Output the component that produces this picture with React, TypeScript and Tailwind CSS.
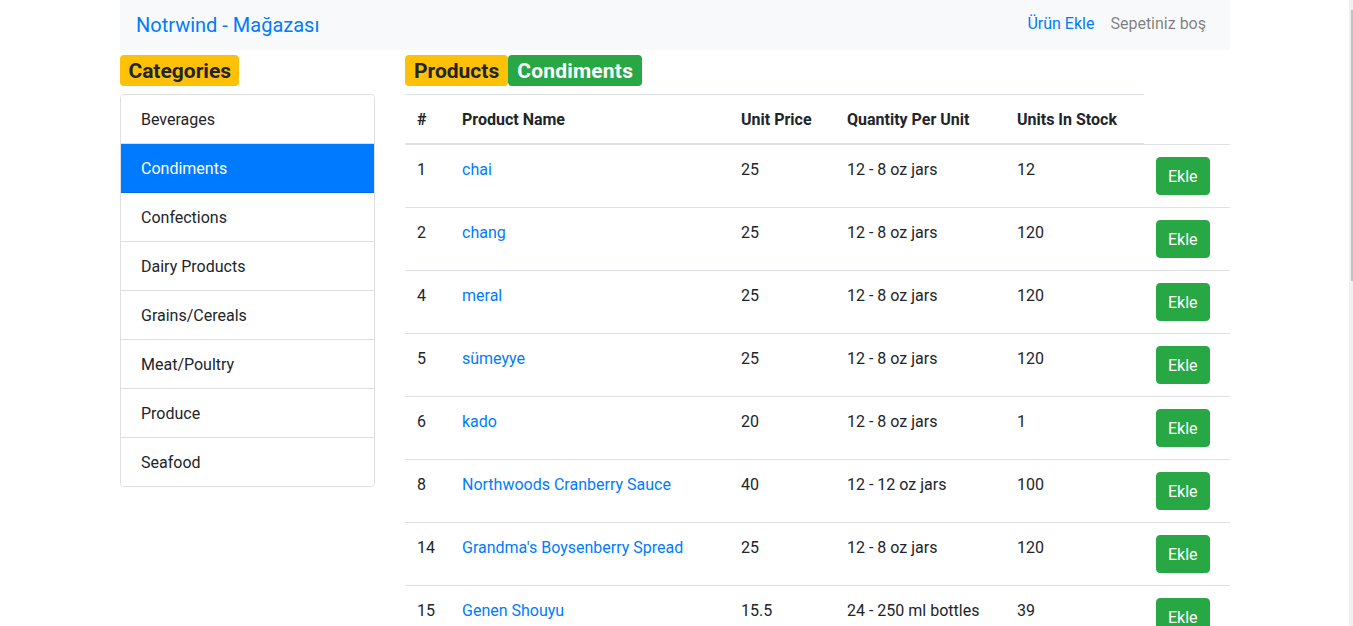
import React from "react";

const categories = [
  "Beverages",
  "Condiments",
  "Confections",
  "Dairy Products",
  "Grains/Cereals",
  "Meat/Poultry",
  "Produce",
  "Seafood",
];

const products = [
  { id: 1, name: "chai", price: "25", qty: "12 - 8 oz jars", stock: 12 },
  { id: 2, name: "chang", price: "25", qty: "12 - 8 oz jars", stock: 120 },
  { id: 4, name: "meral", price: "25", qty: "12 - 8 oz jars", stock: 120 },
  { id: 5, name: "sümeyye", price: "25", qty: "12 - 8 oz jars", stock: 120 },
  { id: 6, name: "kado", price: "20", qty: "12 - 8 oz jars", stock: 1 },
  { id: 8, name: "Northwoods Cranberry Sauce", price: "40", qty: "12 - 12 oz jars", stock: 100 },
  { id: 14, name: "Grandma's Boysenberry Spread", price: "25", qty: "12 - 8 oz jars", stock: 120 },
  { id: 15, name: "Genen Shouyu", price: "15.5", qty: "24 - 250 ml bottles", stock: 39 },
  { id: 16, name: "Pavlova", price: "17.45", qty: "32 - 500 g boxes", stock: 29 },
];

const active = "Condiments";

// td: 12px padding, text nudged 1px down to sit like the original font
const td = "border-t border-[#dee2e6] px-3 pt-[13px] pb-[11px] align-top";

export default function App() {
  return (
    <div
      className="relative h-[626px] w-full overflow-hidden bg-white text-[16px] leading-6 text-[#212529]"
      style={{ fontFamily: '"Segoe UI", Roboto, "Liberation Sans", sans-serif' }}
    >
      <div className="ml-[120px] w-[1110px]">
        {/* navbar */}
        <nav className="flex h-[50px] items-center justify-between bg-[#f8f9fa] px-4">
          <a className="text-[20px] leading-[30px] text-[#007bff]">Notrwind - Mağazası</a>
          <div className="flex items-center pb-[2px]">
            <a className="px-2 text-[#007bff]">Ürün Ekle</a>
            <span className="px-2 text-black/50">Sepetiniz boş</span>
          </div>
        </nav>

        <div className="flex gap-[30px]">
          {/* categories */}
          <div className="w-[255px]">
            <h3 className="mb-2 mt-[5px] flex h-[31px]">
              <span className="rounded-[4px] bg-[#ffc107] px-[8.4px] pb-[4px] pt-[6px] text-[21px] font-bold leading-[21px] text-[#212529]">
                Categories
              </span>
            </h3>
            <ul className="overflow-hidden rounded-[4px] border border-black/[0.125]">
              {categories.map((c, i) => (
                <li
                  key={c}
                  className={
                    (c === active ? "bg-[#007bff] text-white " : "bg-white ") +
                    (i < categories.length - 1 ? "border-b border-black/[0.125] " : "") +
                    "px-5 pb-[11px] pt-[13px]"
                  }
                >
                  {c}
                </li>
              ))}
            </ul>
          </div>

          {/* products */}
          <div className="w-[825px]">
            <h3 className="mb-2 mt-[5px] flex h-[31px]">
              <span className="rounded-[4px] bg-[#ffc107] px-[9px] pb-[4px] pt-[6px] text-[21px] font-bold leading-[21px] text-[#212529]">
                Products
              </span>
              <span className="rounded-[4px] bg-[#28a745] px-[9px] pb-[4px] pt-[6px] text-[21px] font-bold leading-[21px] tracking-[0.2px] text-white">
                {active}
              </span>
            </h3>
            <table className="w-[825px] table-fixed border-collapse">
              <colgroup>
                <col className="w-[45px]" />
                <col className="w-[279px]" />
                <col className="w-[106px]" />
                <col className="w-[170px]" />
                <col className="w-[139px]" />
                <col className="w-[86px]" />
              </colgroup>
              <thead>
                <tr>
                  {["#", "Product Name", "Unit Price", "Quantity Per Unit", "Units In Stock"].map((h) => (
                    <th
                      key={h}
                      className="border-b-2 border-t border-[#dee2e6] px-3 pb-[11px] pt-[13px] text-left align-bottom font-bold"
                    >
                      {h}
                    </th>
                  ))}
                </tr>
              </thead>
              <tbody>
                {products.map((p) => (
                  <tr key={p.id}>
                    <td className={td}>{p.id}</td>
                    <td className={td}>
                      <a className="text-[#007bff]">{p.name}</a>
                    </td>
                    <td className={td}>{p.price}</td>
                    <td className={td}>{p.qty}</td>
                    <td className={td}>{p.stock}</td>
                    <td className="border-t border-[#dee2e6] p-3 align-top">
                      <button
                        type="button"
                        className="rounded-[4px] border border-[#28a745] bg-[#28a745] px-[11px] pb-[5px] pt-[7px] leading-6 text-white"
                      >
                        Ekle
                      </button>
                    </td>
                  </tr>
                ))}
              </tbody>
            </table>
          </div>
        </div>
      </div>

      {/* page scrollbar */}
      <div className="absolute right-0 top-0 h-full w-[4px] bg-[#f1f1f1]">
        <div className="ml-[2px] mt-[10px] h-[271px] w-[2px] bg-[#c1c1c1]" />
      </div>
    </div>
  );
}
